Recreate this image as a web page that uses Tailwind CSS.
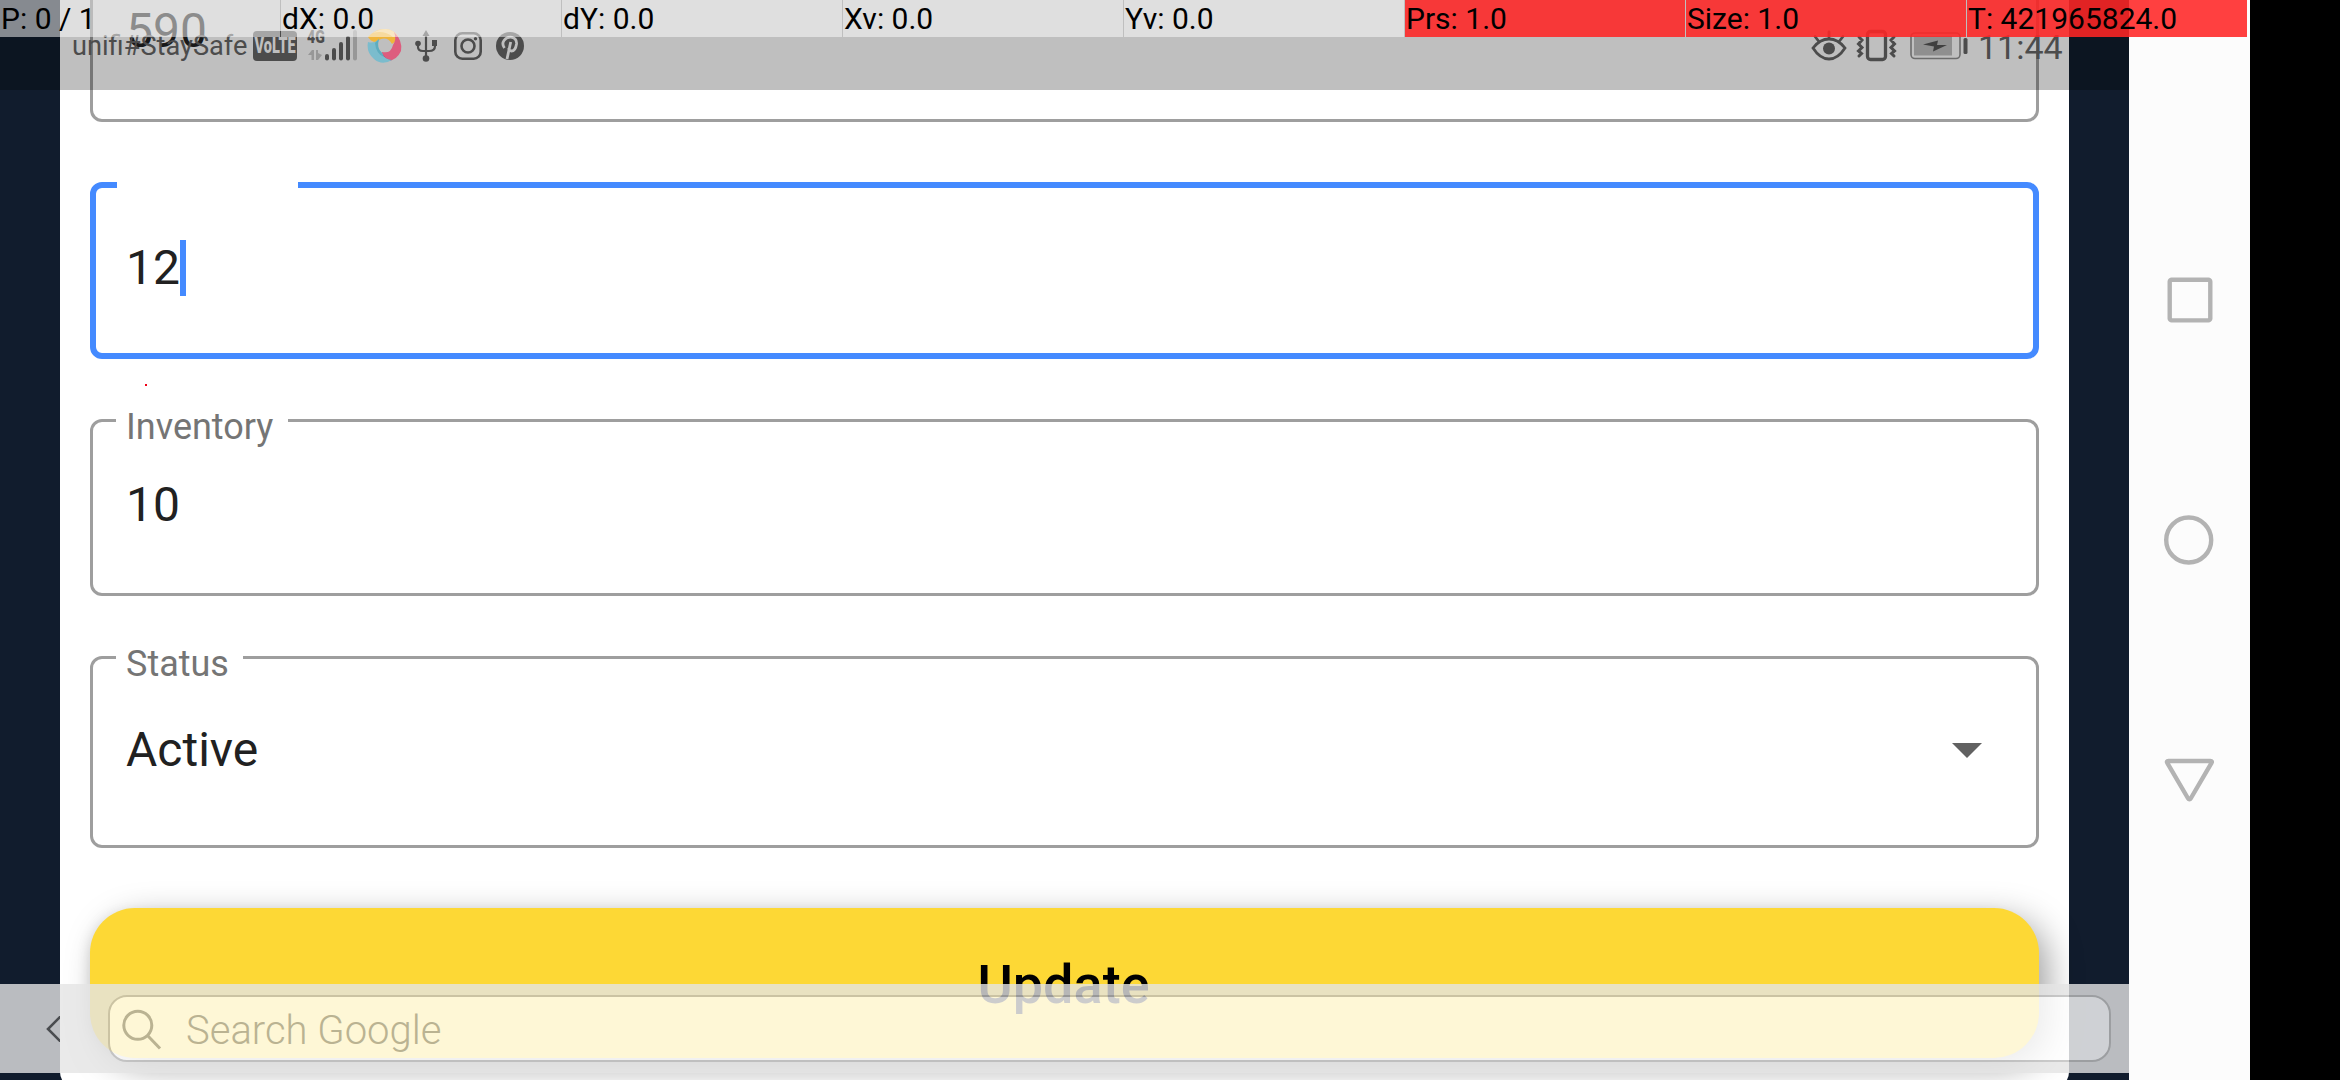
<!DOCTYPE html>
<html lang="en">
<head>
<meta charset="utf-8">
<title>Edit product</title>
<script src="https://cdn.jsdelivr.net/npm/@tailwindcss/browser@4"></script>
</head>
<body class="relative flex h-[1080px] w-[2340px] overflow-hidden bg-black font-[Roboto,sans-serif]">
  <!-- App -->
  <main class="relative h-[1080px] w-[2129px] overflow-hidden bg-[#111c2d] px-[60px]">
    <form class="-mt-[85px] flex h-[1173px] w-[2009px] flex-col rounded-2xl bg-white px-[30px] pt-[30px] text-[48px] leading-[56px] text-[#212121]">
      <div class="h-[177px] rounded-xl border-[3px] border-[#9e9e9e] px-[33px] pt-[55px]">590</div>

      <div class="relative mt-[60px] flex h-[177px] rounded-xl border-[6px] border-[#448aff] px-[30px] pt-[52px]">
        <span class="absolute -top-[6px] left-[21px] h-[6px] w-[181px] bg-white"></span>
        <span>12</span><span class="h-[56px] w-[6px] bg-[#448aff]"></span>
      </div>
      <div class="h-[60px] pt-[25px] pl-[55px]"><div class="h-[2px] w-[2px] bg-[#f00016]"></div></div>

      <div class="relative h-[177px] rounded-xl border-[3px] border-[#9e9e9e] px-[33px] pt-[55px]">
        <label class="absolute -top-[16px] left-[23px] w-[172px] bg-white pl-[10px] text-[36px] leading-[42px] text-[#757575]">Inventory</label>
        10
      </div>

      <div class="relative mt-[60px] flex h-[192px] justify-between rounded-xl border-[3px] border-[#9e9e9e] pr-[54px] pl-[33px] pt-[63px]">
        <label class="absolute -top-[16px] left-[23px] w-[127px] bg-white pl-[10px] text-[36px] leading-[42px] text-[#757575]">Status</label>
        <span>Active</span>
        <svg class="mt-[21px] h-[15px] w-[30px]" viewBox="0 0 30 15"><path d="M0 0h30L15 15z" fill="#616161"/></svg>
      </div>

      <button type="button" class="mt-[60px] h-[150px] shrink-0 rounded-[45px] bg-[#fdd835] pt-[3px] pr-[2px] text-[54px] font-medium text-black shadow-[10px_10px_36px_-3px_rgba(0,0,0,0.4),-6px_0_14px_-6px_rgba(0,0,0,0.12)]">Update</button>
    </form>
  </main>

  <!-- Navigation buttons -->
  <nav class="flex w-[121px] flex-col items-center bg-[#fcfcfc] pt-[270px] pr-[2px]">
    <svg class="h-[60px] w-[60px]" viewBox="0 0 60 60" fill="none" stroke="#b3b3b3" stroke-width="4.4"><rect x="10.700" y="9.8" width="40.6" height="40.6" rx="2"/></svg>
    <svg class="mt-[180px] h-[60px] w-[60px]" viewBox="0 0 60 60" fill="none" stroke="#b3b3b3" stroke-width="4.4"><circle cx="29.7" cy="30" r="22.5"/></svg>
    <svg class="mt-[180px] h-[60px] w-[60px]" viewBox="0 0 60 60" fill="none" stroke="#b3b3b3" stroke-width="4.4" stroke-linejoin="round"><path d="M9.5 11Q7.1 11 8.4 13.2L28.8 48Q30.4 50.4 32 48L52.4 13.2Q53.7 11 51.3 11Z"/></svg>
  </nav>

  <!-- System status bar -->
  <header class="absolute top-0 left-0 flex h-[90px] w-[2129px] items-start justify-between bg-black/25 text-[#4c4c4c]">
    <div class="flex pt-[28px]">
      <span class="ml-[72px] w-[181px] text-[27.2px] leading-[36px] whitespace-nowrap">unifi#StaySafe</span>
      <span class="mt-[3px] flex h-[30px] w-[44px] items-center justify-center rounded-[4px] bg-[#4c4c4c] text-[#bfbfbf]"><span class="scale-x-[.66] text-[22px] leading-none font-black">VoLTE</span></span>
      <span class="relative ml-[10px] h-[36px] w-[51px]">
        <span class="absolute top-[1px] left-0 origin-left scale-x-[.74] text-[19px] leading-[16px] font-black">4G</span>
        <svg class="h-[36px] w-[51px]" viewBox="0 0 51 36" fill="#4c4c4c"><g fill="#979797"><path d="M1 27l4-5h2v10H4.500v-5zM9 22h2v3l4 2-4 5H9z"/><rect x="46" y="2" width="4" height="30.500" rx="2"/></g><rect x="18" y="26" width="4" height="6.500" rx="2"/><rect x="25" y="20" width="4" height="12.500" rx="2"/><rect x="32" y="14" width="4" height="18.500" rx="2"/><rect x="39" y="8" width="4" height="24.500" rx="2"/></svg>
      </span>
      <svg class="ml-[9px] h-[36px] w-[36px]" viewBox="0 0 36 36"><path d="M1 9Q9 0 19 1Q27 2 31 8Q29 14 25 16Q21 9 14 11L9 14Q4 14 1 9Z" fill="#efb53c"/><path d="M6 5Q12 1 19 1Q27 2 31 8L26 9Q17 2 6 5Z" fill="#f3cf86"/><path d="M27 4Q36 13 34 23Q30 32 21 33Q15 31 15 24Q24 26 26 17Q30 11 27 4Z" fill="#dd5d7e"/><path d="M15 24Q17 31 25 32Q17 35 15 24Z" fill="#c03f63"/><path d="M1 14Q7 16 12 11Q9 20 15 25Q17 31 25 32Q15 38 7 31Q-1 24 1 14Z" fill="#7bbccd"/><path d="M12 11Q9 20 15 25L17 29Q9 26 8 15Z" fill="#5eadbf"/></svg>
      <svg class="ml-[12px] h-[36px] w-[24px]" viewBox="0 0 24 36" fill="#4c4c4c"><path d="M11 2l3.500 6h-7z"/><path d="M11 7v24M3 16v3q0 4 5 4h6q6 0 6-5v-3" fill="none" stroke="#4c4c4c" stroke-width="2.200"/><circle cx="3" cy="15.500" r="2.800"/><rect x="17" y="12" width="5" height="6"/><circle cx="11" cy="30.500" r="3.300"/></svg>
      <svg class="ml-[15px] h-[36px] w-[30px]" viewBox="0 0 30 36" fill="none" stroke="#4c4c4c" stroke-width="2.600"><rect x="1.300" y="5.300" width="25.400" height="25.400" rx="7"/><circle cx="14" cy="18" r="6.500"/><circle cx="21.500" cy="10.800" r="1.700" fill="#4c4c4c" stroke="none"/></svg>
      <svg class="ml-[12px] h-[36px] w-[30px]" viewBox="0 0 30 36"><circle cx="14" cy="18" r="14" fill="#4c4c4c"/><path d="M8.500 20Q5.500 16 8 12.500Q11 8.500 16 9.300Q21 10.500 20.500 16Q19.500 23 15.500 23Q12.500 22.500 12.800 20.500M14.700 14L11 31" fill="none" stroke="#bfbfbf" stroke-width="2.800"/></svg>
    </div>
    <div class="flex pr-[64px] pt-[28px]">
      <svg class="h-[36px] w-[36px]" viewBox="0 0 36 36" fill="none" stroke="#4c4c4c" stroke-width="2.800" stroke-linecap="round"><path d="M2 20Q9 11 18 11T34 20Q27 31 18 31T2 20ZM18 10V4M7.500 13L4 8.500M28.500 13L32 8.500"/><circle cx="18" cy="20.500" r="6" fill="#4c4c4c" stroke="none"/></svg>
      <svg class="ml-[9px] h-[36px] w-[42px]" viewBox="0 0 42 36" fill="none" stroke="#4c4c4c" stroke-width="3.300" stroke-linecap="round"><rect x="11.500" y="3.500" width="18" height="28" rx="3"/><path stroke-width="3" d="M3 9l3 3-3.500 4L6 19.500 2.500 23l3 2.500L3 28M38 9l-3 3 3.500 4-3.500 3.500 3.500 3.500-3 2.500 2.500 2.500"/></svg>
      <svg class="ml-[11px] h-[36px] w-[62px]" viewBox="0 0 62 36"><rect x="2" y="5" width="49" height="25.500" rx="4" fill="none" stroke="#6c6c6c" stroke-width="1.600"/><rect x="5" y="8" width="38" height="19.500" fill="#8f8f8f"/><path d="M14 16.500l15-4-1 4.500h10L24 23.500l1-5z" fill="#3f3f3f"/><rect x="54.500" y="10" width="4" height="16" rx="1.500" fill="#4c4c4c"/></svg>
      <span class="ml-[7px] w-[87px] text-[34px] leading-[38px]">11:44</span>
    </div>
  </header>

  <!-- Pointer location readout -->
  <section class="absolute top-0 left-0 flex h-[37px] gap-px text-[30px] leading-[37px] whitespace-nowrap text-black">
    <div class="w-[280px] bg-white/50 pl-px">P: 0 / 1</div>
    <div class="w-[280px] bg-white/50 pl-px">dX: 0.0</div>
    <div class="w-[280px] bg-white/50 pl-px">dY: 0.0</div>
    <div class="w-[280px] bg-white/50 pl-px">Xv: 0.0</div>
    <div class="w-[280px] bg-white/50 pl-px">Yv: 0.0</div>
    <div class="w-[280px] bg-white/50"><div class="bg-[#ff0000]/75 pl-px">Prs: 1.0</div></div>
    <div class="w-[280px] bg-white/50"><div class="bg-[#ff0000]/75 pl-px">Size: 1.0</div></div>
    <div class="w-[280px] bg-white/50"><div class="bg-[#ff0000]/75 pl-px">T: 421965824.0</div></div>
  </section>

  <!-- Search overlay -->
  <section class="absolute top-[984px] left-0 flex h-[89px] w-[2129px] items-start bg-[#e5e5e5] pt-[11px] opacity-80">
    <svg class="mt-[21px] ml-[44px] h-[26px] w-[16px]" viewBox="0 0 16 26" fill="none" stroke="#585858" stroke-width="2.600"><path d="M17 0L4 13l13 13"/></svg>
    <div class="ml-[48px] flex h-[67px] w-[2003px] rounded-[19px] border-2 border-[#bfbfbf] bg-white pl-[12px]">
      <svg class="mt-[11px] h-[42px] w-[42px]" viewBox="0 0 42 42" fill="none" stroke="#aaa" stroke-width="3"><circle cx="15.800" cy="17.300" r="14"/><path d="M26 28l12 12.500"/></svg>
      <span class="ml-[22px] text-[40px] leading-[67px] font-light text-[#aaa]">Search Google</span>
    </div>
  </section>
</body>
</html>
